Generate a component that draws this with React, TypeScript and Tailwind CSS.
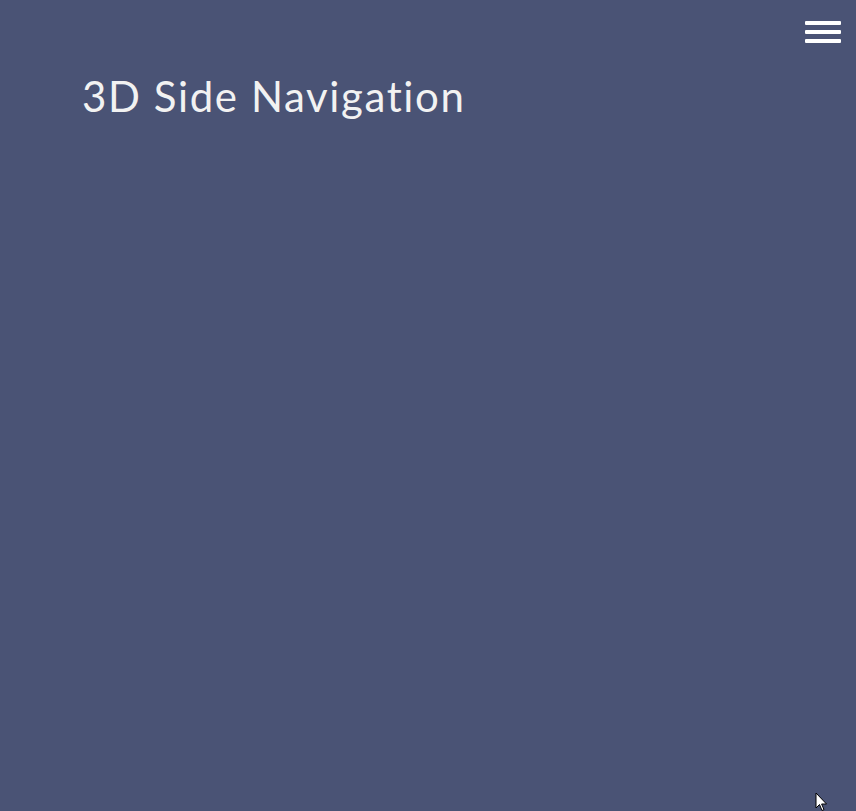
import React from "react";

export default function App() {
  return (
    <div className="relative h-[811px] w-full overflow-hidden bg-[#4a5375]">
      <div className="flex justify-end pr-[15px] pt-[21px]">
        <div className="flex w-[36px] flex-col gap-[5px]">
          <span className="block h-[4px] rounded-[1px] bg-white" />
          <span className="block h-[4px] rounded-[1px] bg-white" />
          <span className="block h-[4px] rounded-[1px] bg-white" />
        </div>
      </div>
      <h1
        className="ml-[82px] mt-[32px] text-[42px] font-normal leading-[1] tracking-[1.6px] text-[#f2f2f2] [font-variant-ligatures:none]"
        style={{ fontFamily: "Lato, 'Open Sans', sans-serif" }}
      >
        3D Side Navigation
      </h1>
      <svg
        className="absolute left-[815px] top-[792px]"
        width="14"
        height="20"
        viewBox="0 0 14 20"
      >
        <path d="M1 1 L1 16 L4.5 12.5 L7 18.5 L9 17.6 L6.6 12 L11.5 12 Z" fill="white" stroke="black" strokeWidth="1" />
      </svg>
    </div>
  );
}
